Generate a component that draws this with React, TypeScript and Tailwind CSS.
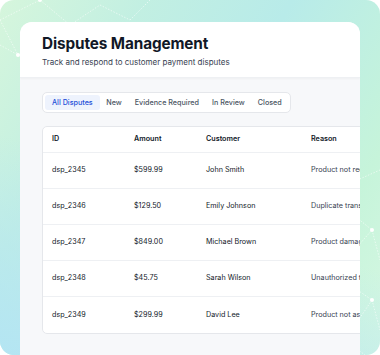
import React from "react";

type Dispute = {
  id: string;
  amount: string;
  customer: string;
  reason: string;
};

const disputes: Dispute[] = [
  { id: "dsp_2345", amount: "$599.99", customer: "John Smith", reason: "Product not received" },
  { id: "dsp_2346", amount: "$129.50", customer: "Emily Johnson", reason: "Duplicate transaction" },
  { id: "dsp_2347", amount: "$849.00", customer: "Michael Brown", reason: "Product damaged" },
  { id: "dsp_2348", amount: "$45.75", customer: "Sarah Wilson", reason: "Unauthorized transaction" },
  { id: "dsp_2349", amount: "$299.99", customer: "David Lee", reason: "Product not as described" },
];

const tabs = ["All Disputes", "New", "Evidence Required", "In Review", "Closed"];

function Network() {
  // faint web of lines in the background corners
  const lines: [number, number, number, number][] = [
    [0, 20, 40, 0], [0, 20, 18, 55], [18, 55, 55, 40], [40, 0, 70, 25], [70, 25, 55, 40],
    [70, 25, 100, 5], [100, 5, 130, 20], [55, 40, 30, 30], [0, 45, 18, 55], [130, 20, 150, 0],
    [335, 190, 380, 170], [335, 200, 372, 230], [372, 230, 380, 260], [350, 285, 372, 300],
    [372, 300, 345, 340], [372, 300, 380, 330], [345, 340, 365, 355], [350, 255, 372, 230],
  ];
  const dots: [number, number][] = [[18, 55], [70, 25], [40, 0], [372, 300], [372, 230], [345, 340]];
  return (
    <svg className="absolute inset-0" width="380" height="355" viewBox="0 0 380 355">
      {lines.map(([x1, y1, x2, y2], i) => (
        <line key={i} x1={x1} y1={y1} x2={x2} y2={y2} stroke="#ffffff" strokeOpacity="0.7" strokeWidth="0.8" strokeDasharray="1.5 1.5" />
      ))}
      {dots.map(([cx, cy], i) => (
        <circle key={i} cx={cx} cy={cy} r="2" fill="#ffffff" />
      ))}
    </svg>
  );
}

export default function App() {
  return (
    <div
      className="relative w-[380px] h-[355px] overflow-hidden rounded-[14px] bg-[linear-gradient(120deg,#d6f6dc_0%,#c2efe2_25%,#b8ebe9_50%,#c6f4da_80%,#d6f7e3_100%)]"
      style={{ fontFamily: "Inter, 'Noto Sans', sans-serif" }}
    >
      <div className="absolute inset-0 bg-[linear-gradient(20deg,#b4e5f3_0%,rgba(180,229,243,0)_45%)]" />
      <Network />
      <div className="relative ml-[20px] mt-[22px] w-[340px] h-[333px] overflow-hidden rounded-t-[12px] bg-[#f7f8fa]">
        <div className="bg-white px-[22px] pt-[12px] h-[56px] shadow-[0_1px_2px_rgba(0,0,0,0.04)] border-b border-[#eef0f3]">
          <h1 className="text-[15.3px] leading-[20px] font-bold text-[#111827] tracking-[-0.1px]">Disputes Management</h1>
          <p className="mt-[3px] text-[8px] leading-[11px] text-[#374151]">Track and respond to customer payment disputes</p>
        </div>
        <div className="px-[22px] pt-[14px]">
          <div className="flex w-fit items-center rounded-[5px] border border-[#e5e7eb] bg-white p-[2px]">
            {tabs.map((t, i) => (
              <div
                key={t}
                className={
                  i === 0
                    ? "px-[7px] h-[15px] flex items-center rounded-[3px] bg-[#eef3fd] text-[7.2px] leading-none font-medium text-[#1d4ed8]"
                    : "px-[6.5px] h-[15px] flex items-center text-[7.2px] leading-none font-medium text-[#4b5563]"
                }
              >
                {t}
              </div>
            ))}
          </div>
          <div className="mt-[13px] w-[400px] rounded-[5px] border border-[#e5e7eb] bg-white">
            <div className="grid grid-cols-[82px_72px_105px_1fr] h-[26px] items-center border-b border-[#eef0f3] px-[9px] text-[7.2px] font-semibold text-[#111827]">
              <div>ID</div>
              <div>Amount</div>
              <div>Customer</div>
              <div>Reason</div>
            </div>
            {disputes.map((d, i) => (
              <div
                key={d.id}
                className={
                  "grid grid-cols-[82px_72px_105px_1fr] h-[36px] items-center px-[9px] text-[7.2px] text-[#111827] whitespace-nowrap" +
                  (i < disputes.length - 1 ? " border-b border-[#eef0f3]" : "")
                }
              >
                <div>{d.id}</div>
                <div>{d.amount}</div>
                <div>{d.customer}</div>
                <div className="text-[#374151]">{d.reason}</div>
              </div>
            ))}
          </div>
        </div>
      </div>
    </div>
  );
}
